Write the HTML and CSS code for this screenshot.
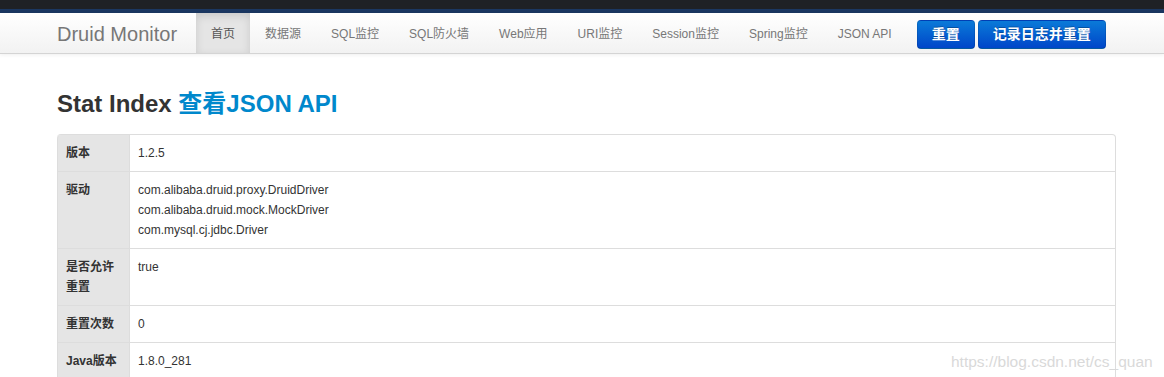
FILE: index.html
```html
<!DOCTYPE html>
<html lang="zh-CN">
<head>
  <meta charset="UTF-8" />
  <meta name="viewport" content="width=device-width, initial-scale=1.0" />
  <title>Druid Stat Index</title>
  <link rel="stylesheet" href="styles.css">
</head>
<body>
  <div class="topbar"></div>

  <div class="navbar">
    <div class="navbar-inner">
      <a class="brand" href="#">Druid Monitor</a>
      <ul class="nav">
        <li class="active"><a href="#">首页</a></li>
        <li><a href="#">数据源</a></li>
        <li><a href="#">SQL监控</a></li>
        <li><a href="#">SQL防火墙</a></li>
        <li><a href="#">Web应用</a></li>
        <li><a href="#">URI监控</a></li>
        <li><a href="#">Session监控</a></li>
        <li><a href="#">Spring监控</a></li>
        <li><a href="#">JSON API</a></li>
      </ul>
      <div class="actions">
        <button class="btn btn-primary">重置</button>
        <button class="btn btn-primary">记录日志并重置</button>
      </div>
    </div>
  </div>

  <div class="container">
    <h3>Stat Index <a href="#">查看JSON API</a></h3>

    <table class="table-bordered">
      <tr>
        <th>版本</th>
        <td>1.2.5</td>
      </tr>
      <tr>
        <th>驱动</th>
        <td>com.alibaba.druid.proxy.DruidDriver<br>com.alibaba.druid.mock.MockDriver<br>com.mysql.cj.jdbc.Driver</td>
      </tr>
      <tr>
        <th>是否允许重置</th>
        <td>true</td>
      </tr>
      <tr>
        <th>重置次数</th>
        <td>0</td>
      </tr>
      <tr>
        <th>Java版本</th>
        <td>1.8.0_281</td>
      </tr>
    </table>
  </div>

  <div class="watermark">https://blog.csdn.net/cs_quan</div>
</body>
</html>
```

FILE: styles.css
```css
:root{
  --link:#0088cc;
  --text:#333333;
  --border:#dddddd;
  --label-bg:#e5e5e5;
}
*{box-sizing:border-box}
body{margin:0;font-family:"Liberation Sans","Noto Sans CJK SC",Arial,sans-serif;font-size:12px;line-height:20px;color:var(--text);background:#fff;overflow:hidden}
a{color:var(--link);text-decoration:none}

/* window strip above the navbar */
.topbar{height:9px;background:#1f2125;border-bottom:4px solid #1b3761;box-sizing:content-box}

.navbar{background:linear-gradient(to bottom,#ffffff,#f2f2f2);border-bottom:1px solid #d4d4d4;box-shadow:0 1px 4px rgba(0,0,0,.065)}
.navbar-inner{display:flex;height:40px;padding-left:57px}
.brand{font-size:20px;line-height:20px;padding:11px 19px 9px 0;color:#777;font-weight:200}
.nav{display:flex;list-style:none;margin:0 10px 0 0;padding:0}
.nav li a{display:block;padding:11px 15px 9px;color:#777;line-height:20px}
.nav li.active a{background:#e5e5e5;color:#555;box-shadow:inset 0 3px 8px rgba(0,0,0,.125)}
.actions{display:flex;gap:3px;margin:7px 0 0;align-self:flex-start}
.btn{font-family:inherit;font-size:14px;font-weight:700;line-height:19px;padding:4px 14px;border-radius:4px;cursor:pointer}
.btn-primary{color:#fff;background:linear-gradient(to bottom,#0a7ad8,#0046c9);border:1px solid rgba(0,0,0,.1);border-bottom-color:rgba(0,0,0,.25);text-shadow:0 -1px 0 rgba(0,0,0,.25)}

.container{padding:30px 48px 0 57px}
h3{margin:0 0 10px;font-size:24px;line-height:40px;font-weight:700;color:var(--text)}

.table-bordered{width:100%;border-collapse:separate;border-spacing:0;border:1px solid var(--border);border-left:0;border-radius:4px}
.table-bordered th,.table-bordered td{padding:8px;line-height:20px;text-align:left;vertical-align:top;border-top:1px solid var(--border);border-left:1px solid var(--border)}
.table-bordered tr:first-child th,.table-bordered tr:first-child td{border-top:0}
.table-bordered tr:first-child th{border-top-left-radius:4px}
.table-bordered tr:first-child td{border-top-right-radius:4px}
.table-bordered th{width:72px;background:var(--label-bg);font-weight:700}

.watermark{position:absolute;left:951px;top:352px;font-size:15.5px;line-height:20px;color:#d9d9d9;white-space:nowrap}
```
